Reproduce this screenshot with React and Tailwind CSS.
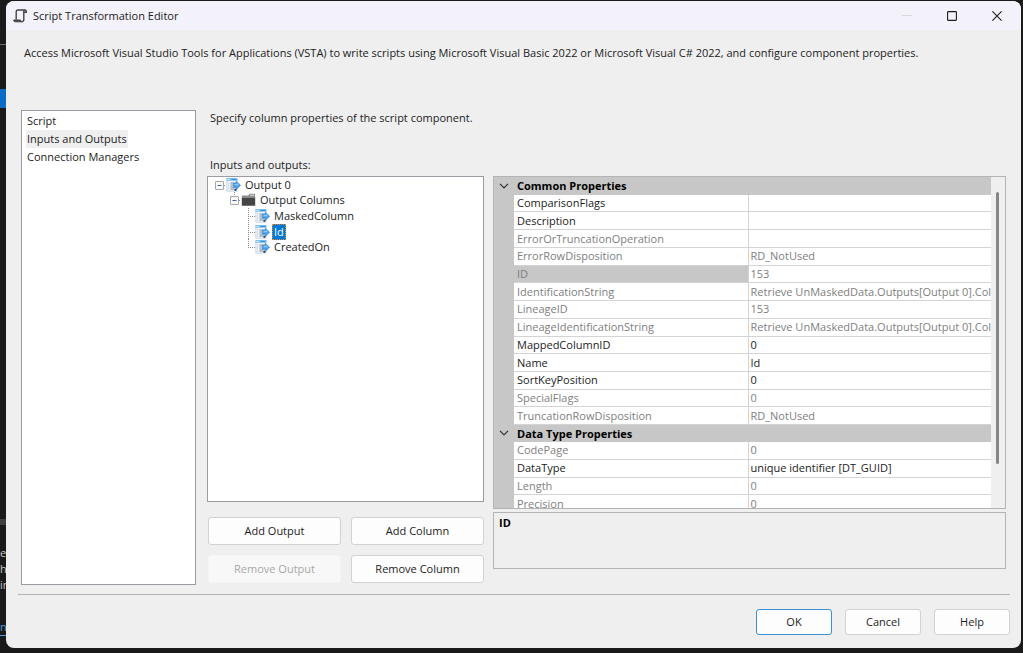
import { useState } from "react";

const pages = ["Script", "Inputs and Outputs", "Connection Managers"];

const groups = [
  {
    title: "Common Properties",
    rows: [
      { name: "ComparisonFlags", value: "" },
      { name: "Description", value: "" },
      { name: "ErrorOrTruncationOperation", value: "", readOnly: true },
      { name: "ErrorRowDisposition", value: "RD_NotUsed", readOnly: true },
      { name: "ID", value: "153", readOnly: true },
      { name: "IdentificationString", value: "Retrieve UnMaskedData.Outputs[Output 0].Col", readOnly: true },
      { name: "LineageID", value: "153", readOnly: true },
      { name: "LineageIdentificationString", value: "Retrieve UnMaskedData.Outputs[Output 0].Col", readOnly: true },
      { name: "MappedColumnID", value: "0" },
      { name: "Name", value: "Id" },
      { name: "SortKeyPosition", value: "0" },
      { name: "SpecialFlags", value: "0", readOnly: true },
      { name: "TruncationRowDisposition", value: "RD_NotUsed", readOnly: true },
    ],
  },
  {
    title: "Data Type Properties",
    rows: [
      { name: "CodePage", value: "0", readOnly: true },
      { name: "DataType", value: "unique identifier [DT_GUID]" },
      { name: "Length", value: "0", readOnly: true },
      { name: "Precision", value: "0", readOnly: true },
    ],
  },
];

function ScriptIcon() {
  return (
    <svg width="14" height="14" viewBox="0 0 14 14" fill="none" stroke="#444" strokeWidth="1.4" aria-hidden="true">
      <path d="M3.2 10.5V3C3.2 1.6 3.8 1 5 1H12.2C13 1 13.3 1.8 13.3 3.2H11" />
      <path d="M10.8 1.2V10.6C10.8 12 10.2 12.6 9 12.6" />
      <path d="M0.6 11H7.6C7.6 12.2 8.2 12.8 9.2 12.8H2.6C1.3 12.8 0.7 12.2 0.6 11Z" fill="#444" strokeWidth="1" />
    </svg>
  );
}

function OutputIcon() {
  return (
    <svg width="15" height="14" viewBox="0 0 15 14" className="shrink-0" aria-hidden="true">
      <rect x="0.9" y="0.9" width="10" height="12.2" fill="#f2f6fa" stroke="#b9c9d9" strokeWidth="0.8" />
      <rect x="0.5" y="0" width="11" height="2.8" fill="#7cc0f0" />
      <path d="M1.4 1.4h2.4" stroke="#e6f4ff" strokeWidth="0.9" />
      <path d="M5.4 1.4h5" stroke="#2f8fe0" strokeWidth="1" />
      <path d="M4.4 5h4M4.4 7h3.4M4.4 9h3.4M4.4 11h3.8" stroke="#7388a0" strokeWidth="1" />
      <path d="M2 5h1.2M2 7h1.2M2 9h1.2M2 11h1.2" stroke="#c6d2de" strokeWidth="1" />
      <path d="M7.6 5H10.2V3.2L14.6 7.2L10.4 11.4V9.6H7.6Z" fill="#4a9ee8" stroke="#3480c8" strokeWidth="0.6" />
      <path d="M8.6 6h2.4V5l2 2.2H8.6z" fill="#93ccf8" />
      <path d="M8.4 10.8h2v2h-2z" fill="#1d3c63" />
    </svg>
  );
}

function FolderIcon() {
  return (
    <svg width="15" height="14" viewBox="0 0 15 14" className="shrink-0" aria-hidden="true">
      <path d="M1 4V2.6H7.2L8.6 0.8H14V4Z" fill="#8a8a8a" />
      <path d="M9 2.2H13" stroke="#e4e4e4" strokeWidth="1" />
      <path d="M0.8 4.2H14.2V12.8H0.8Z" fill="#454545" />
      <path d="M0.8 4.2H14.2" stroke="#9a9a9a" strokeWidth="0.8" />
    </svg>
  );
}

function Expander({ parentLine }) {
  return (
    <svg width="12" height="16" viewBox="0 0 12 16" className="shrink-0" aria-hidden="true">
      {parentLine && <path d="M5.5 0V4" stroke="#8a8a8a" strokeDasharray="1 1" />}
      <path d="M10 8.5H12" stroke="#8a8a8a" strokeDasharray="1 1" />
      <rect x="1.5" y="4.5" width="8" height="8" rx="0.5" fill="#fafafa" stroke="#a6a6a6" />
      <path d="M3.5 8.5H7.5" stroke="#3f62a8" />
    </svg>
  );
}

function Branch({ last }) {
  return (
    <svg width="7" height="16" viewBox="0 0 7 16" className="shrink-0 overflow-visible" aria-hidden="true">
      <path d={last ? "M0.5 0V8" : "M0.5 0V16"} stroke="#8a8a8a" strokeDasharray="1 1" />
      <path d="M0 8.5H7" stroke="#8a8a8a" strokeDasharray="1 1" />
    </svg>
  );
}

function Chevron() {
  return (
    <svg width="10" height="6" viewBox="0 0 10 6" fill="none" stroke="#333" strokeWidth="1.2" aria-hidden="true">
      <path d="M1 0.8L5 4.8L9 0.8" />
    </svg>
  );
}

function PushButton({ children, primary, className = "", ...rest }) {
  return (
    <button
      type="button"
      className={`rounded-[3px] border text-center disabled:border-[#f4f4f4] disabled:bg-[#f8f8f8] disabled:text-[#a8a8a8] ${
        primary ? "border-[#3b8fd4] bg-[#fdfdfd]" : "border-[#d2d2d2] bg-[#fdfdfd]"
      } ${className}`}
      {...rest}
    >
      {children}
    </button>
  );
}

function TreeLabel({ name, selected, onSelect }) {
  return (
    <button
      type="button"
      onClick={() => onSelect(name)}
      className={`ml-0.5 border px-px leading-[14px] ${
        selected === name ? "border-dotted border-[#e08a3a] bg-[#0078d7] text-white" : "border-transparent"
      }`}
    >
      {name}
    </button>
  );
}

export default function App() {
  const [page, setPage] = useState("Inputs and Outputs");
  const [node, setNode] = useState("Id");
  const [property, setProperty] = useState("ID");

  return (
    <div className="flex h-screen min-h-[480px] bg-[#1a1a1a] pt-px pr-0.5 pb-[5px] font-['Open_Sans','Noto_Sans',sans-serif] text-[11px] leading-4 text-[#1c1c1c]">
      <div className="flex w-1.5 shrink-0 flex-col overflow-hidden text-[#c8c8c8]" aria-hidden="true">
        <div className="mt-[43px] h-px bg-[#6a6a6a]" />
        <div className="mt-11 h-[19px] bg-[#0a6cc4]" />
        <div className="mt-auto h-1.5 bg-[#3f3f40]" />
        <div className="mt-5 mb-[26px] leading-4">
          <div>e</div>
          <div>h</div>
          <div className="whitespace-nowrap">in</div>
        </div>
        <div className="mb-3 border-b border-[#569cd6] text-[#569cd6]">n</div>
      </div>

      <main className="flex min-w-0 flex-1 flex-col overflow-hidden rounded-lg bg-[#efefef]">
        <header className="flex h-[29px] shrink-0 items-center bg-[#f3f1f9] pr-0.5 pl-[7px]">
          <ScriptIcon />
          <h1 className="ml-1.5">Script Transformation Editor</h1>
          <div className="ml-auto flex h-full">
            <button type="button" aria-label="Minimize" disabled className="flex w-[45px] items-center justify-center">
              <svg width="10" height="10" viewBox="0 0 10 10" stroke="#d6dadd" aria-hidden="true">
                <path d="M0 4.5H10" />
              </svg>
            </button>
            <button type="button" aria-label="Maximize" className="flex w-[45px] items-center justify-center">
              <svg width="10" height="10" viewBox="0 0 10 10" fill="none" stroke="#1c1c1c" strokeWidth="1.1" aria-hidden="true">
                <rect x="0.6" y="0.6" width="8.8" height="8.8" rx="0.6" />
              </svg>
            </button>
            <button type="button" aria-label="Close" className="flex w-[45px] items-center justify-center">
              <svg width="10" height="10" viewBox="0 0 10 10" stroke="#1c1c1c" strokeWidth="1.1" aria-hidden="true">
                <path d="M0.4 0.4L9.6 9.6M9.6 0.4L0.4 9.6" />
              </svg>
            </button>
          </div>
        </header>

        <p className="mt-[15px] shrink-0 px-[18px]">
          Access Microsoft Visual Studio Tools for Applications (VSTA) to write scripts using Microsoft Visual Basic 2022 or
          Microsoft Visual C# 2022, and configure component properties.
        </p>

        <div className="mt-[49px] flex min-h-0 flex-1 pr-[15px] pl-[15px]">
          <nav className="flex w-[175px] shrink-0 flex-col items-start border border-[#9a9ca3] bg-white pt-px pl-1">
            {pages.map((p) => (
              <button
                key={p}
                type="button"
                onClick={() => setPage(p)}
                className={`px-px leading-[18px] ${page === p ? "bg-[#efefef]" : ""}`}
              >
                {p}
              </button>
            ))}
          </nav>

          <div className="ml-[11px] flex min-w-0 flex-1 flex-col pb-0.5">
            <p className="pl-[3px]">Specify column properties of the script component.</p>
            <h2 className="mt-[31px] pl-[3px]">Inputs and outputs:</h2>

            <div className="mt-[3px] flex min-h-0 flex-1 gap-[9px]">
              <div className="flex w-[277px] shrink-0 flex-col">
                <div className="min-h-0 flex-1 overflow-hidden border border-[#9a9ca3] bg-white pl-1.5">
                  <ul className="grid h-[78px] grid-rows-5">
                    <li className="flex items-center">
                      <Expander />
                      <OutputIcon />
                      <TreeLabel name="Output 0" selected={node} onSelect={setNode} />
                    </li>
                    <li className="flex items-center pl-[15px]">
                      <Expander parentLine />
                      <FolderIcon />
                      <TreeLabel name="Output Columns" selected={node} onSelect={setNode} />
                    </li>
                    {["MaskedColumn", "Id", "CreatedOn"].map((name, i) => (
                      <li key={name} className="flex items-center pl-[34px]">
                        <Branch last={i === 2} />
                        <OutputIcon />
                        <TreeLabel name={name} selected={node} onSelect={setNode} />
                      </li>
                    ))}
                  </ul>
                </div>
                <div className="mt-[15px] grid grid-cols-2 gap-2.5 pl-px">
                  <PushButton className="h-7">Add Output</PushButton>
                  <PushButton className="h-7">Add Column</PushButton>
                  <PushButton className="h-7" disabled>
                    Remove Output
                  </PushButton>
                  <PushButton className="h-7">Remove Column</PushButton>
                </div>
              </div>

              <div className="flex min-w-0 flex-1 flex-col gap-[3px] pb-3.5">
                <div className="flex min-h-0 flex-1 overflow-hidden border border-[#b4b4b4]">
                  <div className="min-w-0 flex-1 overflow-hidden border-t border-[#c7c7c7]">
                    <table className="h-[335px] w-full table-fixed border-collapse text-left">
                      <colgroup>
                        <col className="w-5" />
                        <col className="w-[234px]" />
                        <col />
                      </colgroup>
                      {groups.map((g) => (
                        <tbody key={g.title}>
                          <tr className="bg-[#c7c7c7]">
                            <td className="p-0 text-center">
                              <button type="button" aria-label={`Collapse ${g.title}`} className="block w-full pl-[5px]">
                                <Chevron />
                              </button>
                            </td>
                            <th colSpan={2} className="p-0 pl-[3px] font-bold text-black">
                              {g.title}
                            </th>
                          </tr>
                          {g.rows.map((r) => (
                            <tr key={r.name} onClick={() => setProperty(r.name)} className={r.readOnly ? "text-[#808080]" : ""}>
                              <td className="bg-[#c7c7c7] p-0" />
                              <th
                                scope="row"
                                className={`border-r border-b border-[#d4d4d4] p-0 pl-[3px] font-normal ${
                                  property === r.name ? "bg-[#c7c7c7]" : "bg-white"
                                }`}
                              >
                                {r.name}
                              </th>
                              <td className="overflow-hidden border-b border-[#d4d4d4] bg-white p-0 pl-0.5 whitespace-nowrap">
                                {r.value}
                              </td>
                            </tr>
                          ))}
                        </tbody>
                      ))}
                    </table>
                  </div>
                  <div className="flex w-3.5 shrink-0 pt-[15px] pl-[5px]">
                    <div className="h-[86%] w-[3px] rounded-full bg-[#868686]" />
                  </div>
                </div>
                <div className="h-[57px] shrink-0 border border-[#b4b4b4] px-[5px] pt-0.5 font-bold text-black">{property}</div>
              </div>
            </div>
          </div>
        </div>

        <footer className="mr-[11px] ml-3 mt-[9px] flex shrink-0 justify-end gap-[13px] border-t border-[#b4b4b4] pt-3.5 pb-[13px]">
          <PushButton primary className="h-[26px] w-[76px]">
            OK
          </PushButton>
          <PushButton className="h-[26px] w-[76px]">Cancel</PushButton>
          <PushButton className="h-[26px] w-[76px]">Help</PushButton>
        </footer>
      </main>
    </div>
  );
}
